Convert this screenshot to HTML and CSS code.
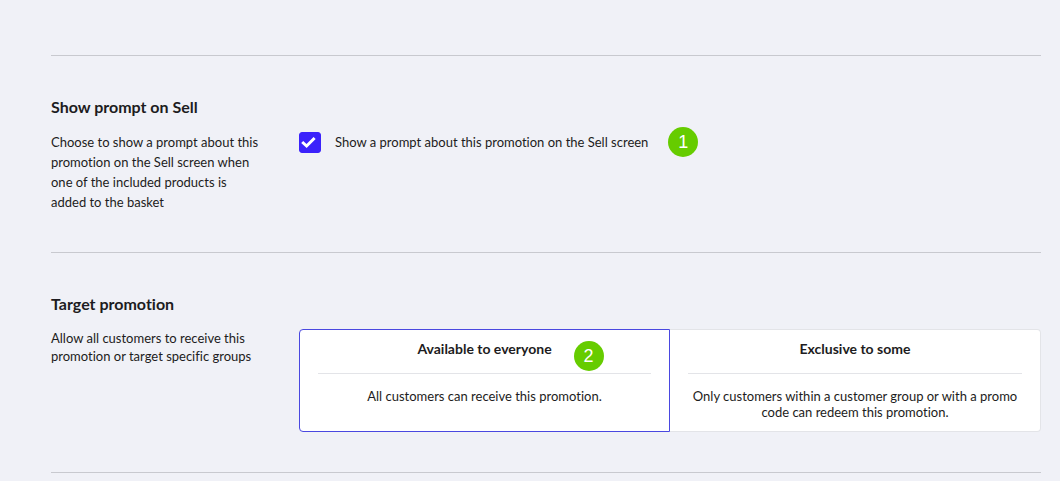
FILE: index.html
```html
<!DOCTYPE html>
<html lang="en">
<head>
    <meta charset="UTF-8">
    <meta name="viewport" content="width=device-width, initial-scale=1.0">
    <title>Promotion settings</title>
    <link rel="stylesheet" href="styles.css">
</head>
<body>
    <main class="settings">
        <section class="section">
            <h2>Show prompt on Sell</h2>
            <div class="row">
                <p class="description">Choose to show a prompt about this promotion on the Sell screen when one of the included products is added to the basket</p>
                <div class="prompt">
                    <span class="checkbox">
                        <input type="checkbox" id="show-prompt" checked>
                        <svg viewBox="0 0 22 21" aria-hidden="true">
                            <path d="M3.2 10 L7.6 14 L15.6 6" />
                        </svg>
                    </span>
                    <label for="show-prompt">Show a prompt about this promotion on the Sell screen</label>
                    <span class="badge">1</span>
                </div>
            </div>
        </section>

        <section class="section">
            <h2>Target promotion</h2>
            <div class="row">
                <p class="description compact">Allow all customers to receive this promotion or target specific groups</p>
                <div class="options">
                    <input type="radio" name="target" id="everyone" checked>
                    <label class="option" for="everyone">
                        <strong>Available to everyone</strong>
                        <span>All customers can receive this promotion.</span>
                    </label>
                    <input type="radio" name="target" id="some">
                    <label class="option" for="some">
                        <strong>Exclusive to some</strong>
                        <span>Only customers within a customer group or with a promo code can redeem this promotion.</span>
                    </label>
                    <span class="badge floating">2</span>
                </div>
            </div>
        </section>
    </main>
</body>
</html>
```
FILE: styles.css
```css
*{
    margin: 0;
    padding: 0;
    box-sizing: border-box;
}
body{
    font-family: Lato, sans-serif;
    font-size: 13px;
    line-height: 20px;
    font-variant-ligatures: none;
    color: #1d1c21;
    background: #f0f1f7;
}
.settings{
    margin: 55px 19px 0 51px;
    border-bottom: 1px solid #c8c9cf;
}
.section{
    padding: 40px 0;
    border-top: 1px solid #c8c9cf;
}
.section h2{
    font-size: 16px;
    line-height: 22px;
    margin-bottom: 14px;
}
.row{
    display: grid;
    grid-template-columns: 212px 1fr;
    gap: 36px;
    align-items: start;
}
.compact{
    line-height: 18px;
}

/* checkbox row */
.prompt{
    display: flex;
    align-items: center;
    height: 20px;
}
.checkbox{
    display: grid;
    width: 22px;
    height: 21px;
    margin-right: 14px;
}
.checkbox input,
.checkbox svg{
    grid-area: 1 / 1;
    width: 22px;
    height: 21px;
}
.checkbox input{
    appearance: none;
    border: 1px solid #3b22fb;
    border-radius: 3px;
    background: #fff;
}
.checkbox input:checked{
    background: #3b22fb;
}
.checkbox svg{
    fill: none;
    stroke: #fff;
    stroke-width: 3;
    pointer-events: none;
}
.checkbox input:not(:checked) + svg{
    display: none;
}

.badge{
    width: 30px;
    height: 30px;
    border-radius: 50%;
    background: #66cc00;
    color: #fff;
    font-family: "Liberation Sans", sans-serif;
    font-size: 18px;
    line-height: 30px;
    text-align: center;
}
.prompt .badge{
    margin-left: 20px;
}

/* option cards */
.options{
    position: relative;
    display: grid;
    grid-template-columns: 1fr 1fr;
}
.options input{
    position: absolute;
    opacity: 0;
}
.option{
    padding: 11px 18px;
    border: 1px solid #e3e4e8;
    background: #fff;
    line-height: 16px;
    text-align: center;
}
.option:first-of-type{
    border-radius: 4px 0 0 4px;
}
.option:last-of-type{
    border-left-width: 0;
    border-radius: 0 4px 4px 0;
}
.options input:checked + .option{
    border-width: 1px;
    border-color: #4a48e0;
}
.option strong{
    display: block;
    padding-bottom: 16px;
    margin-bottom: 14px;
    border-bottom: 1px solid #e3e4e8;
    font-size: 14px;
}
.floating{
    position: absolute;
    top: 12px;
    left: 37%;
}
```
